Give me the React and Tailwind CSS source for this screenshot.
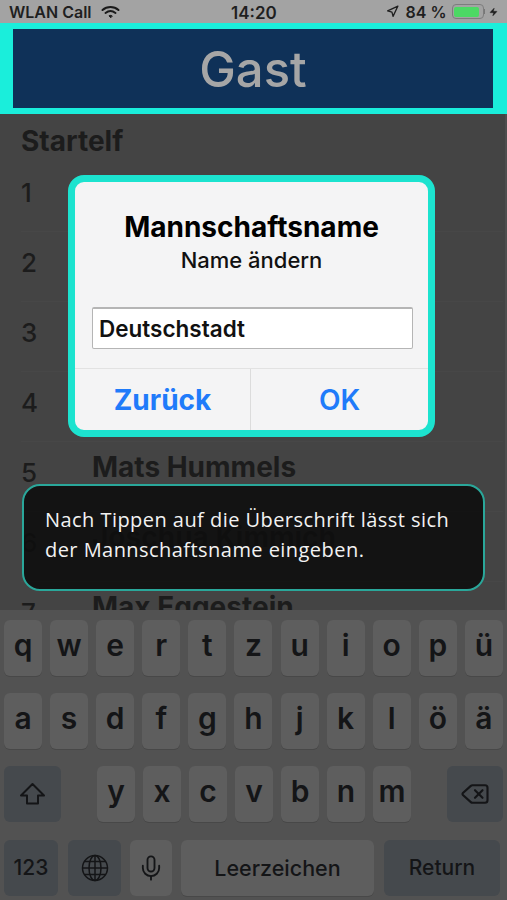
import { Delete, Mic, Navigation, Zap } from 'lucide-react';

const ROWS = [
  { nr: 1 },
  { nr: 2 },
  { nr: 3 },
  { nr: 4 },
  { nr: 5, name: 'Mats Hummels' },
  { nr: 6, name: 'Joschua Kimmich' },
  { nr: 7, name: 'Max Eggestein' },
];

const ROW_ONE = ['q', 'w', 'e', 'r', 't', 'z', 'u', 'i', 'o', 'p', 'ü'];
const ROW_TWO = ['a', 's', 'd', 'f', 'g', 'h', 'j', 'k', 'l', 'ö', 'ä'];
const ROW_THREE = ['y', 'x', 'c', 'v', 'b', 'n', 'm'];

function Key({ label }) {
  return (
    <div className="w-[38px] h-[56px] rounded-[6px] bg-[#5e5e5e] shadow-[0_1px_0_#484848] flex items-center justify-center text-[#141517] text-[30px] font-semibold pb-[6px]">
      {label}
    </div>
  );
}

function StatusBar() {
  return (
    <div className="h-[23px] bg-[#a3a3a3] flex items-center justify-between pl-[9px] pr-[9px] text-[#1f1f1f] text-[16px] font-semibold relative">
      <div className="flex items-center gap-[9px]">
        <span>WLAN Call</span>
        <svg width="19" height="14" viewBox="0 0 19 14" fill="none" stroke="#1a1a1a" strokeWidth="2" strokeLinecap="round">
          <path d="M1.5 5 C6 1 13 1 17.5 5" />
          <path d="M4.5 8 C7.5 5.6 11.5 5.6 14.5 8" />
          <path d="M9.5 12.5 L8 10.8 C9 10.2 10 10.2 11 10.8 Z" fill="#1a1a1a" strokeWidth="1" />
        </svg>
      </div>
      <span className="absolute left-[231px] top-[3px] leading-[20px] text-[17px]">14:20</span>
      <div className="flex items-center">
        <Navigation className="w-[13px] h-[13px] mr-[7px]" strokeWidth={2.4} />
        <span className="mr-[5px]">84 %</span>
        <div className="w-[32px] h-[15px] rounded-[4px] border border-[#7d7d7d] p-[1.5px]">
          <div className="w-[25px] h-full rounded-[2px] bg-[#4cd964]" />
        </div>
        <div className="w-[1.5px] h-[5px] bg-[#777] mr-[4px]" />
        <Zap className="w-[9px] h-[12px] fill-[#1f1f1f]" strokeWidth={1} />
      </div>
    </div>
  );
}

function PlayerList() {
  return (
    <div className="h-[496px] bg-[#444444] overflow-hidden pl-[21px] pr-[2px] border-r-2 border-[#4e4e4e]">
      <h2 className="text-[#1c1c1c] text-[28px] font-bold leading-[30px] mt-[12px] mb-[6px]">Startelf</h2>
      {ROWS.map(r => (
        <div key={r.nr} className="h-[70px] flex border-b border-[#474747]">
          <span className="w-[71px] text-[#1c1c1c] text-[26px] font-medium leading-[30px] mt-[16px]">{r.nr}</span>
          {r.name && <span className="text-[#1c1c1c] text-[28px] font-bold leading-[30px] mt-[10px]">{r.name}</span>}
        </div>
      ))}
    </div>
  );
}

function Keyboard() {
  return (
    <div className="h-[290px] bg-[#525252] pt-[10px] px-[4px] flex flex-col">
      <div className="flex justify-between">
        {ROW_ONE.map(k => <Key key={k} label={k} />)}
      </div>
      <div className="flex justify-between mt-[17px]">
        {ROW_TWO.map(k => <Key key={k} label={k} />)}
      </div>
      <div className="flex justify-between mt-[17px]">
        <div className="w-[57px] h-[56px] rounded-[6px] bg-[#45494d] flex items-center justify-center">
          <svg width="27" height="24" viewBox="0 0 27 24" fill="none" stroke="#141517" strokeWidth="2" strokeLinejoin="round">
            <path d="M13.5 2 L25 13.5 H19 V21.5 H8 V13.5 H2 Z" />
          </svg>
        </div>
        <div className="flex gap-[8px]">
          {ROW_THREE.map(k => <Key key={k} label={k} />)}
        </div>
        <div className="w-[56px] h-[56px] rounded-[6px] bg-[#45494d] flex items-center justify-center">
          <Delete className="w-[34px] h-[30px] text-[#141517]" strokeWidth={1.7} />
        </div>
      </div>
      <div className="flex mt-[18px] text-[#141517] text-[21px] font-medium">
        <div className="w-[54px] h-[56px] rounded-[6px] bg-[#45494d] flex items-center justify-center">123</div>
        <div className="w-[53px] h-[56px] ml-[10px] rounded-[6px] bg-[#45494d] flex items-center justify-center">
          <svg width="28" height="28" viewBox="0 0 28 28" fill="none" stroke="#141517" strokeWidth="1.5">
            <circle cx="14" cy="14" r="12.5" />
            <ellipse cx="14" cy="14" rx="6" ry="12.5" />
            <path d="M14 1.5 V26.5 M1.5 14 H26.5 M3.5 7.5 H24.5 M3.5 20.5 H24.5" />
          </svg>
        </div>
        <div className="w-[42px] h-[56px] ml-[9px] rounded-[6px] bg-[#5e5e5e] flex items-center justify-center">
          <Mic className="w-[28px] h-[28px]" strokeWidth={1.6} />
        </div>
        <div className="w-[193px] h-[56px] ml-[9px] rounded-[6px] bg-[#5e5e5e] shadow-[0_1px_0_#484848] flex items-center justify-center text-[21.5px]">Leerzeichen</div>
        <div className="w-[116px] h-[56px] ml-[10px] rounded-[6px] bg-[#45494d] flex items-center justify-center">Return</div>
      </div>
    </div>
  );
}

export default function App() {
  return (
    <div className="w-[507px] h-[900px] relative overflow-hidden bg-[#444444] font-['Inter',sans-serif]">
      <StatusBar />

      <div className="h-[91px] bg-[#1aeedb] pl-[13px] pr-[14px] py-[6px]">
        <div className="h-full bg-[#0f3158] flex items-center justify-center text-[#a6a6a6] text-[49px] font-medium pt-[3px]">
          Gast
        </div>
      </div>

      <PlayerList />
      <Keyboard />

      {/* Dialog */}
      <div className="absolute left-[68px] top-[175px] w-[367px] h-[262px] rounded-[16px] border-[7px] border-[#1ce3cf] bg-[#f4f4f5] flex flex-col">
        <p className="text-center text-black text-[28px] font-bold leading-[32px] mt-[29px]">Mannschaftsname</p>
        <p className="text-center text-[#111] text-[22px] font-medium leading-[28px] mt-[3px]">Name ändern</p>
        <div className="ml-[17px] mr-[15px] mt-[33px] h-[42px] bg-white border border-[#b5b5b5] border-t-2 rounded-[2px] flex items-center pl-[6px] text-[#111] text-[22.5px] font-semibold">
          Deutschstadt
        </div>
        <div className="flex-1 mt-[19px] border-t border-[#e2e2e2] flex">
          <div className="w-[176px] border-r border-[#dcdcdc] flex items-center justify-center text-[#1f7bfa] text-[28px] font-bold">Zurück</div>
          <div className="flex-1 flex items-center justify-center text-[#1f7bfa] text-[28px] font-semibold">OK</div>
        </div>
      </div>

      {/* Hint */}
      <div className="absolute left-[22px] top-[484px] w-[463px] h-[107px] rounded-[18px] border-2 border-[#2aa79a] bg-[#0e0e0e]/90 pl-[21px] pt-[19px] text-[#f2f2f2] text-[20px] tracking-[0.45px] leading-[30px] font-['Open_Sans',sans-serif]">
        <p>Nach Tippen auf die Überschrift lässt sich</p>
        <p>der Mannschaftsname eingeben.</p>
      </div>
    </div>
  );
}
